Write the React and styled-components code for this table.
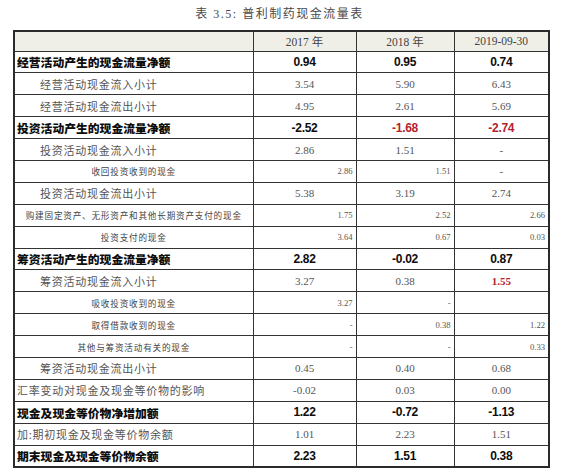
import React from "react";
import styled, { createGlobalStyle } from "styled-components";

const Global = createGlobalStyle`
  html, body { margin: 0; padding: 0; background: #fff; }
  body { width: 567px; height: 475px; overflow: hidden; }
`;

const Page = styled.div`
  padding: 5px 0 0 13px;
  width: 535px;
`;

const Title = styled.div`
  font-family: "Liberation Serif", "Noto Sans CJK SC", serif;
  font-size: 12px;
  letter-spacing: 1.5px;
  color: #4a4a4a;
  text-align: center;
  height: 18px;
  line-height: 18px;
  margin-bottom: 7px;
  padding-right: 2px;
`;

const Table = styled.table`
  width: 535px;
  border-collapse: collapse;
  table-layout: fixed;
  border: 2px solid #2b2b2b;
`;

const HeadRow = styled.tr`
  height: 20px;
  background: #efefe8;
`;

const Row = styled.tr`
  height: 21.9px;
`;

const HeadCell = styled.th`
  border: 1.5px solid #333;
  padding: 0;
  font-family: "Liberation Serif", "Noto Sans CJK SC", serif;
  font-weight: 400;
  font-size: 11.5px;
  color: #444;
  text-align: center;
`;

const LabelCell = styled.td`
  border: 1.5px solid #333;
  padding: 0 0 0 ${(p) => (p.$kind === "normal" ? "25px" : p.$kind === "sub" ? "0" : "2px")};
  text-align: ${(p) => (p.$kind === "sub" ? "center" : "left")};
  white-space: nowrap;
  overflow: hidden;
  font-family: "Noto Sans CJK SC", sans-serif;
  font-size: ${(p) => (p.$kind === "sub" ? "8.6px" : p.$kind === "bold" ? "11.8px" : "11px")};
  letter-spacing: ${(p) => (p.$kind === "sub" ? "0.8px" : p.$kind === "bold" ? "0" : "0.75px")};
  font-weight: ${(p) => (p.$kind === "bold" ? 900 : 400)};
  color: ${(p) => (p.$kind === "bold" ? "#0d0d0d" : p.$kind === "sub" ? "#444" : "#555")};
`;

const ValueCell = styled.td`
  border: 1.5px solid #333;
  padding: 0 ${(p) => (p.$kind === "sub" ? "3px" : "0")} 0 0;
  text-align: ${(p) => p.$align};
  white-space: nowrap;
  font-family: ${(p) =>
    p.$kind === "bold" ? '"Liberation Sans", Arial, sans-serif' : '"Liberation Serif", serif'};
  font-weight: ${(p) => (p.$kind === "bold" || p.$red ? 700 : 400)};
  font-size: ${(p) => (p.$kind === "sub" ? "8.6px" : p.$kind === "bold" ? "12px" : "11px")};
  letter-spacing: ${(p) => (p.$kind === "bold" ? "-0.3px" : "0")};
  color: ${(p) => (p.$red ? "#b3232b" : p.$kind === "bold" ? "#0d0d0d" : "#555")};
`;

const rows = [
  { label: "经营活动产生的现金流量净额", kind: "bold", values: ["0.94", "0.95", "0.74"] },
  { label: "经营活动现金流入小计", kind: "normal", values: ["3.54", "5.90", "6.43"] },
  { label: "经营活动现金流出小计", kind: "normal", values: ["4.95", "2.61", "5.69"] },
  { label: "投资活动产生的现金流量净额", kind: "bold", values: ["-2.52", "-1.68", "-2.74"], red: [false, true, true] },
  { label: "投资活动现金流入小计", kind: "normal", values: ["2.86", "1.51", "-"] },
  { label: "收回投资收到的现金", kind: "sub", values: ["2.86", "1.51", "-"], center: [false, false, true] },
  { label: "投资活动现金流出小计", kind: "normal", values: ["5.38", "3.19", "2.74"] },
  { label: "购建固定资产、无形资产和其他长期资产支付的现金", kind: "sub", values: ["1.75", "2.52", "2.66"] },
  { label: "投资支付的现金", kind: "sub", values: ["3.64", "0.67", "0.03"] },
  { label: "筹资活动产生的现金流量净额", kind: "bold", values: ["2.82", "-0.02", "0.87"] },
  { label: "筹资活动现金流入小计", kind: "normal", values: ["3.27", "0.38", "1.55"], red: [false, false, true] },
  { label: "吸收投资收到的现金", kind: "sub", values: ["3.27", "-", ""] },
  { label: "取得借款收到的现金", kind: "sub", values: ["-", "0.38", "1.22"] },
  { label: "其他与筹资活动有关的现金", kind: "sub", values: ["-", "-", "0.33"] },
  { label: "筹资活动现金流出小计", kind: "normal", values: ["0.45", "0.40", "0.68"] },
  { label: "汇率变动对现金及现金等价物的影响", kind: "plain", values: ["-0.02", "0.03", "0.00"] },
  { label: "现金及现金等价物净增加额", kind: "bold", values: ["1.22", "-0.72", "-1.13"] },
  { label: "加:期初现金及现金等价物余额", kind: "plain", values: ["1.01", "2.23", "1.51"] },
  { label: "期末现金及现金等价物余额", kind: "bold", values: ["2.23", "1.51", "0.38"] },
];

export default function App() {
  return (
    <>
      <Global />
      <Page>
        <Title>表 3.5: 普利制药现金流量表</Title>
        <Table>
          <colgroup>
            <col style={{ width: 239 }} />
            <col style={{ width: 103 }} />
            <col style={{ width: 98 }} />
            <col style={{ width: 95 }} />
          </colgroup>
          <thead>
            <HeadRow>
              <HeadCell />
              <HeadCell>2017 年</HeadCell>
              <HeadCell>2018 年</HeadCell>
              <HeadCell>2019-09-30</HeadCell>
            </HeadRow>
          </thead>
          <tbody>
            {rows.map((r, i) => (
              <Row key={i}>
                <LabelCell $kind={r.kind}>{r.label}</LabelCell>
                {r.values.map((v, j) => {
                  const centered = r.kind !== "sub" || (r.center && r.center[j]);
                  return (
                    <ValueCell
                      key={j}
                      $kind={centered && r.kind === "sub" ? "subc" : r.kind}
                      $align={centered ? "center" : "right"}
                      $red={r.red ? r.red[j] : false}
                    >
                      {v}
                    </ValueCell>
                  );
                })}
              </Row>
            ))}
          </tbody>
        </Table>
      </Page>
    </>
  );
}
